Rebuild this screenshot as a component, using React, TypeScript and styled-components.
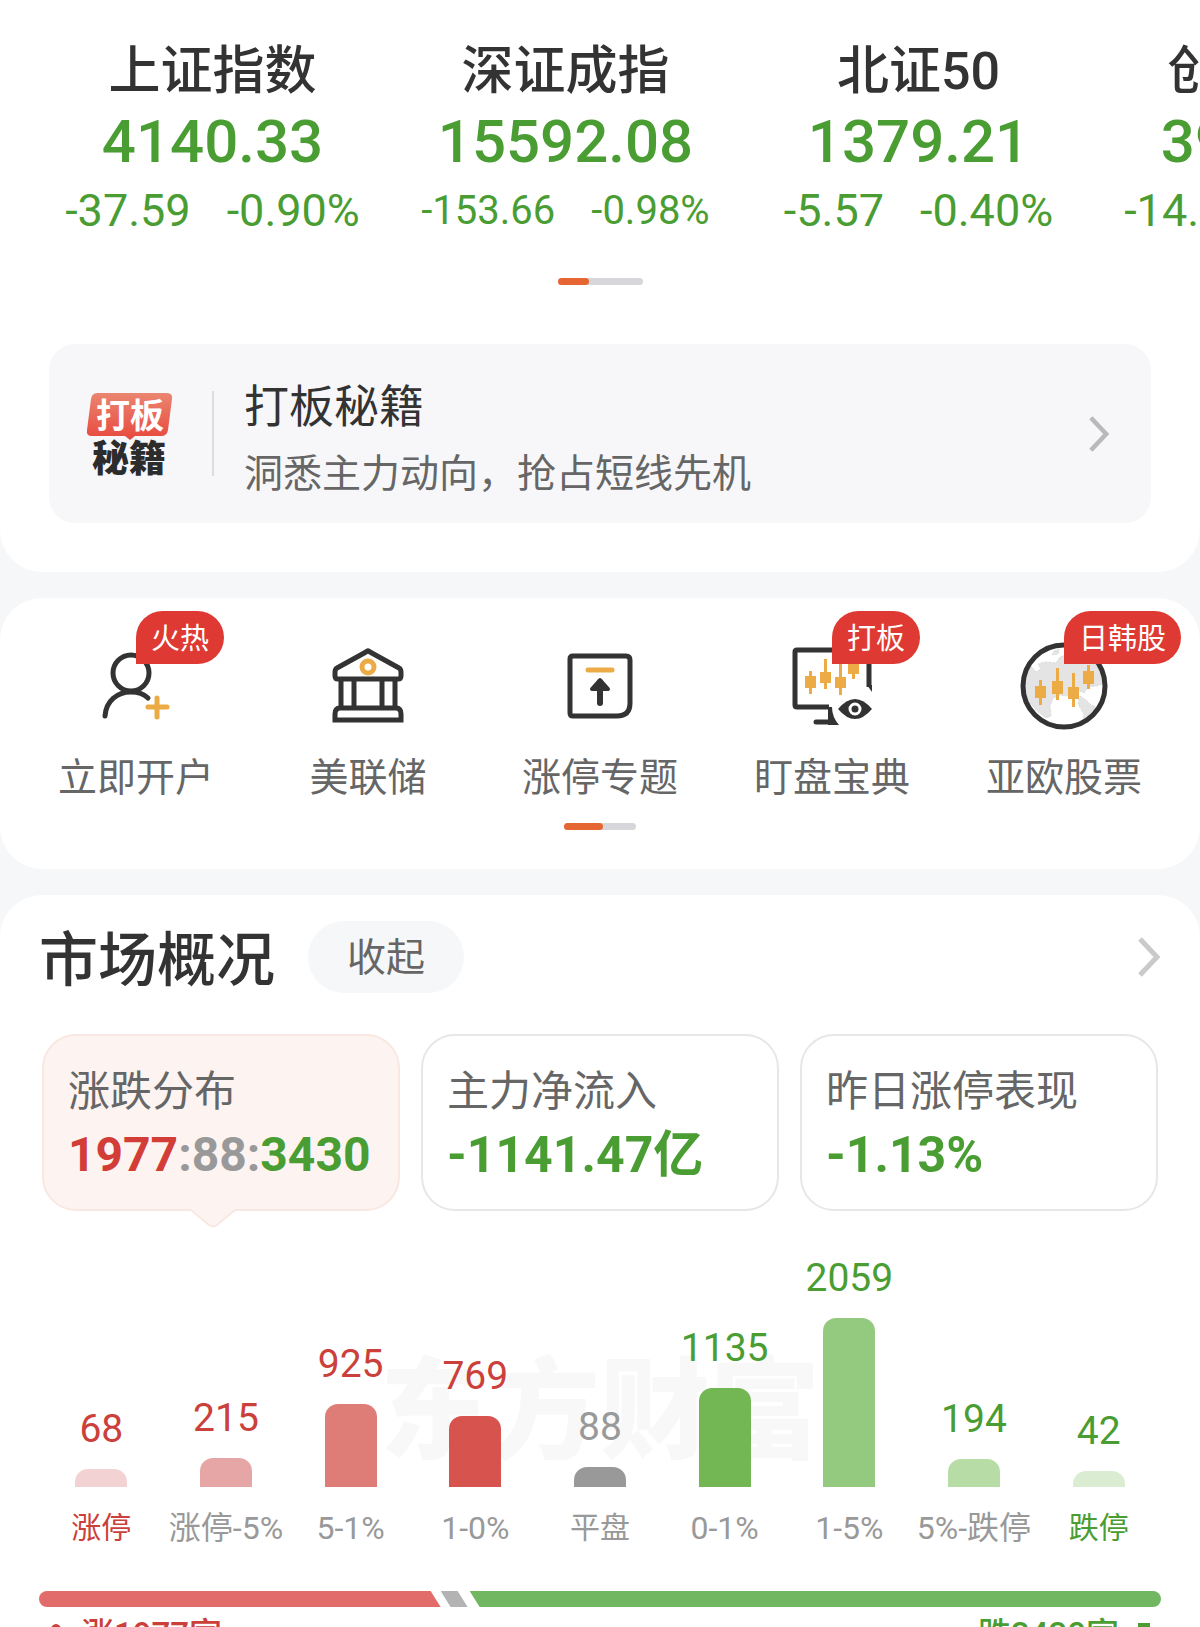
import React from "react";
import styled, { createGlobalStyle } from "styled-components";

const color = {
  ink: "#333333",
  sub: "#666666",
  muted: "#999999",
  green: "#4a9d32",
  red: "#cb403a",
  orange: "#e56633",
  amber: "#ecab45",
  page: "#f6f7f9",
};

const GlobalStyle = createGlobalStyle`
  * { box-sizing: border-box; }
  body {
    margin: 0;
    background: ${color.page};
    color: ${color.ink};
    font-family: Roboto, "Noto Sans CJK SC", sans-serif;
  }
  button { font-family: inherit; border: 0; margin: 0; cursor: pointer; }
  a { color: inherit; text-decoration: none; }
  h1, h2, p { margin: 0; font-weight: 400; }
`;

const Screen = styled.main`
  display: flex;
  flex-direction: column;
  gap: 26px;
  height: 100vh;
  overflow: hidden auto;
  scrollbar-width: none;
`;

const Panel = styled.section`
  flex: none;
  background: #fff;
  border-radius: 42px;
`;

const IndexPanel = styled(Panel)`
  padding: 40px 0 49px;
  border-radius: 0 0 42px 42px;
`;

const IndexStrip = styled.div`
  display: flex;
  padding-left: 36px;
  overflow: hidden;
`;

const IndexCard = styled.a`
  flex: none;
  width: 353px;
  display: flex;
  flex-direction: column;
  align-items: center;
  gap: 4px;
  white-space: nowrap;
`;

const IndexName = styled.span`
  font-size: 52px;
  line-height: 64px;
  font-weight: 500;
`;

const IndexValue = styled.span`
  font-size: 60px;
  line-height: 68px;
  font-weight: 500;
  color: ${color.green};
`;

const IndexChange = styled.span<{ $compact?: boolean }>`
  display: flex;
  gap: 36px;
  font-size: ${(p) => (p.$compact ? 40 : 45)}px;
  line-height: 62px;
  color: ${color.green};
`;

const Pager = styled.div<{ $width: number; $top: number }>`
  width: ${(p) => p.$width}px;
  height: 7px;
  margin: ${(p) => p.$top}px auto 0;
  border-radius: 4px;
  background: #d6d6db;
`;

const PagerThumb = styled.div<{ $width: number }>`
  width: ${(p) => p.$width}px;
  height: 7px;
  border-radius: 4px;
  background: ${color.orange};
`;

const Banner = styled.a`
  display: flex;
  align-items: center;
  height: 179px;
  margin: 59px 49px 0;
  padding: 0 41px 0 36px;
  border-radius: 26px;
  background: #f7f7f9;
`;

const BannerDivider = styled.span`
  width: 2px;
  height: 85px;
  margin: 0 30px 0 39px;
  background: #dcdde0;
`;

const BannerText = styled.span`
  flex: 1;
  display: flex;
  flex-direction: column;
  gap: 12px;
  padding-top: 12px;
`;

const BannerTitle = styled.span`
  font-size: 45px;
  line-height: 56px;
`;

const BannerSub = styled.span`
  font-size: 39px;
  line-height: 52px;
  color: ${color.sub};
`;

const ShortcutPanel = styled(Panel)`
  padding: 40px 20px 39px;
`;

const ShortcutGrid = styled.nav`
  display: grid;
  grid-template-columns: repeat(5, 1fr);
`;

const Shortcut = styled.a`
  display: flex;
  flex-direction: column;
  align-items: center;
  gap: 18px;
`;

const ShortcutIcon = styled.span`
  position: relative;
  width: 96px;
  height: 96px;
`;

const Badge = styled.span`
  position: absolute;
  left: 48px;
  top: -27px;
  padding: 4px 15px 0;
  border-radius: 27px 27px 27px 0;
  background: #de3a33;
  color: #fff;
  font-size: 29px;
  line-height: 49px;
  white-space: nowrap;
`;

const ShortcutLabel = styled.span`
  font-size: 39px;
  line-height: 52px;
  color: ${color.sub};
`;

const MarketPanel = styled(Panel)`
  padding: 26px 39px 40px;
  border-radius: 42px 42px 0 0;
`;

const MarketHeader = styled.header`
  display: flex;
  align-items: center;
  gap: 33px;
`;

const MarketTitle = styled.h2`
  padding-top: 8px;
  font-size: 59px;
  line-height: 64px;
  font-weight: 500;
`;

const FoldButton = styled.button`
  height: 72px;
  padding: 2px 39px 0;
  border-radius: 36px;
  background: ${color.page};
  color: ${color.sub};
  font-size: 39px;
  line-height: 70px;
`;

const MoreButton = styled.button`
  display: flex;
  margin-left: auto;
  padding: 0;
  background: none;
`;

const Tabs = styled.div`
  display: grid;
  grid-template-columns: repeat(3, 1fr);
  gap: 21px;
  margin: 41px 3px 0;
`;

const Tab = styled.button<{ $active?: boolean }>`
  position: relative;
  display: flex;
  flex-direction: column;
  gap: 5px;
  height: 177px;
  padding: 28px 24px;
  border: 2px solid ${(p) => (p.$active ? "#f9e8e1" : "#e7e7e7")};
  border-radius: 34px;
  background: ${(p) => (p.$active ? "#fdf4f1" : "#fff")};
  text-align: left;
  white-space: nowrap;
`;

const TabLabel = styled.span`
  font-size: 42px;
  line-height: 56px;
  color: ${color.sub};
`;

const TabValue = styled.span<{ $small?: boolean }>`
  font-size: ${(p) => (p.$small ? 48 : 50)}px;
  line-height: 60px;
  font-weight: 700;
  color: ${color.green};
`;

const Tone = styled.span<{ $color: string }>`
  color: ${(p) => p.$color};
`;

const TabPointer = styled.svg`
  position: absolute;
  left: 147px;
  top: 173px;
`;

const Chart = styled.div`
  position: relative;
  display: grid;
  grid-template-columns: repeat(9, 1fr);
  align-items: end;
  margin-top: 47px;
`;

const Watermark = styled.span`
  position: absolute;
  inset: 80px 0 auto;
  text-align: center;
  font-size: 110px;
  line-height: 150px;
  font-weight: 900;
  color: #f8f8f8;
`;

const Column = styled.div`
  position: relative;
  display: flex;
  flex-direction: column;
  align-items: center;
  white-space: nowrap;
`;

const ColumnValue = styled.span<{ $color: string }>`
  margin-bottom: 20px;
  font-size: 39px;
  line-height: 40px;
  color: ${(p) => p.$color};
`;

const ColumnBar = styled.span<{ $color: string }>`
  width: 52px;
  border-radius: 13px 13px 0 0;
  background: ${(p) => p.$color};
`;

const ColumnLabel = styled.span<{ $color: string; $range: boolean }>`
  margin-top: 21px;
  font-size: ${(p) => (p.$range ? 32 : 30)}px;
  line-height: 40px;
  color: ${(p) => p.$color};
`;

const Ratio = styled.div`
  display: flex;
  height: 16px;
  margin-top: 43px;
  border-radius: 8px;
  overflow: hidden;
`;

const RatioUp = styled.span`
  background: #e26c6a;
  clip-path: polygon(0 0, calc(100% - 10px) 0, 100% 100%, 0 100%);
`;

const RatioFlat = styled.span`
  width: 27px;
  background: #b3b3b3;
  clip-path: polygon(0 0, 17px 0, 100% 100%, 10px 100%);
`;

const RatioDown = styled.span`
  flex: 1;
  margin-left: 2px;
  background: #71b661;
  clip-path: polygon(0 0, 100% 0, 100% 100%, 10px 100%);
`;

const Totals = styled.div`
  display: flex;
  justify-content: space-between;
  margin-top: 4px;
  padding: 0 9px;
`;

const Total = styled.span<{ $color: string }>`
  display: flex;
  align-items: center;
  gap: 17px;
  font-size: 33px;
  line-height: 48px;
  font-weight: 500;
  color: ${(p) => p.$color};
`;

const Chevron = ({ stroke, small }: { stroke: string; small?: boolean }) => (
  <svg
    width={small ? 22 : 24}
    height={small ? 36 : 40}
    viewBox="0 0 24 40"
    fill="none"
    stroke={stroke}
    strokeWidth="5"
  >
    <path d="M3 2 L20 20 L3 38" />
  </svg>
);

const BannerLogo = () => (
  <svg width="88" height="88" viewBox="0 0 88 88">
    <defs>
      <linearGradient id="logoRed" x1="0" y1="0" x2="0" y2="1">
        <stop offset="0" stopColor="#ea8570" />
        <stop offset="1" stopColor="#e8493e" />
      </linearGradient>
    </defs>
    <path
      d="M12 3 H82 Q88 3 87 9 L83 40 Q82 46 76 46 H50 L45 50 L40 46 H7 Q1 46 2 40 L6 9 Q7 3 12 3 Z"
      fill="url(#logoRed)"
    />
    <text x="45" y="38" textAnchor="middle" fontFamily="Noto Sans CJK SC" fontWeight="700" fontSize="34" fill="#fff">
      打板
    </text>
    <text x="44" y="82" textAnchor="middle" fontFamily="Noto Sans CJK SC" fontWeight="900" fontSize="37" fill="#2c2c2c">
      秘籍
    </text>
  </svg>
);

const IconFrame = ({ children }: { children: React.ReactNode }) => (
  <svg
    width="96"
    height="96"
    viewBox="0 0 96 96"
    fill="none"
    stroke={color.ink}
    strokeWidth="5"
    strokeLinecap="round"
    strokeLinejoin="round"
  >
    {children}
  </svg>
);

const AccountIcon = () => (
  <IconFrame>
    <ellipse cx="43" cy="35" rx="18" ry="18" />
    <path d="M17 78 C18 63 29 54 43 54 C51 54 56 56 60 60" />
    <path d="M60 69 H79 M69 60 V79" stroke={color.amber} />
  </IconFrame>
);

const BankIcon = () => (
  <IconFrame>
    <path d="M46 14 Q48 12 50 14 L79 30 Q81 31 81 34 V38 Q81 41 78 41 H18 Q15 41 15 38 V34 Q15 31 17 30 Z" />
    <path d="M21 42 V69 M34 42 V69 M62 42 V69 M75 42 V69" />
    <path d="M15 82 V76 Q15 70 20 70 H76 Q81 70 81 76 V82 Z" strokeLinejoin="miter" />
    <circle cx="48" cy="29" r="6" stroke={color.amber} />
  </IconFrame>
);

const LimitUpIcon = () => (
  <IconFrame>
    <path d="M21 18 H74 Q78 18 78 22 V65 Q78 78 65 78 H21 Q18 78 18 75 V21 Q18 18 21 18 Z" />
    <path d="M36 32 H60" stroke={color.amber} />
    <path d="M48 44 V65" strokeWidth="6" />
    <path d="M40 51 L48 42 L56 51 Z" fill={color.ink} strokeWidth="4" />
  </IconFrame>
);

type Candle = [x: number, high: number, open: number, close: number, low: number];

const Candles = ({ items }: { items: Candle[] }) => (
  <g stroke="none" fill={color.amber}>
    {items.map(([x, high, open, close, low]) => (
      <React.Fragment key={x}>
        <rect x={x - 1} y={high} width="3" height={low - high} />
        <rect x={x - 5} y={open} width="11" height={close - open} />
      </React.Fragment>
    ))}
  </g>
);

const MonitorIcon = () => (
  <IconFrame>
    <path d="M45 69 H13 Q11 69 11 67 V14 Q11 12 13 12 H83 Q85 12 85 14 V49" strokeLinecap="butt" />
    <path d="M83 47 L88 54 V47 Z" fill={color.ink} stroke="none" />
    <path d="M32 84 H46" />
    <path d="M44 69 H48 Q48 79 55 87 H44 Z" fill={color.ink} stroke="none" />
    <Candles
      items={[
        [26, 33, 38, 50, 56],
        [41, 21, 34, 45, 51],
        [56, 26, 39, 50, 57],
        [69, 14, 25, 36, 41],
      ]}
    />
    <path d="M54 71 Q71 51 88 71 Q71 91 54 71 Z" fill={color.ink} stroke="none" />
    <circle cx="71" cy="71" r="5" stroke="#fff" strokeWidth="3" />
  </IconFrame>
);

const GlobeIcon = () => (
  <IconFrame>
    <path
      d="M9 38 L14 27 L20 34 L25 31 L22 26 L29 24 L40 25 L44 19 L50 17 H68 L78 24 L84 34 L87 46 L80 48 L72 49 L68 55 L62 52 L56 55 L50 58 L44 57 L37 60 L34 68 L35 78 L30 80 L20 72 L12 62 L8 50 Z M64 58 L70 62 L75 67 L83 70 L76 79 L67 84 L68 76 L62 66 Z M38 13 L43 11 L42 16 L36 17 Z"
      fill="#e4e4e4"
      stroke="#dcdcdc"
      strokeWidth="1"
      strokeDasharray="2 2"
    />
    <circle cx="48" cy="48" r="41" />
    <Candles
      items={[
        [24, 42, 48, 60, 67],
        [41, 30, 43, 56, 62],
        [57, 35, 49, 61, 69],
        [72, 27, 33, 46, 51],
      ]}
    />
  </IconFrame>
);

const Arrow = ({ down }: { down?: boolean }) => (
  <svg width="16" height="28" viewBox="0 0 16 28" fill="currentColor">
    <path d={down ? "M2 2 H14 V15 H16 L8 27 L0 15 H2 Z" : "M4 5 Q8 1 12 5 L16 14 H13 V28 H3 V14 H0 Z"} />
  </svg>
);

const indices = [
  { name: "上证指数", value: "4140.33", change: "-37.59", percent: "-0.90%" },
  { name: "深证成指", value: "15592.08", change: "-153.66", percent: "-0.98%", compact: true },
  { name: "北证50", value: "1379.21", change: "-5.57", percent: "-0.40%" },
  { name: "创业板指", value: "3914.87", change: "-14.27", percent: "-0.36%" },
];

const shortcuts = [
  { label: "立即开户", badge: "火热", Icon: AccountIcon },
  { label: "美联储", Icon: BankIcon },
  { label: "涨停专题", Icon: LimitUpIcon },
  { label: "盯盘宝典", badge: "打板", Icon: MonitorIcon },
  { label: "亚欧股票", badge: "日韩股", Icon: GlobeIcon },
];

const columns = [
  { label: "涨停", count: 68, bar: "#f2d2d2", tone: color.red, labelTone: color.red },
  { label: "涨停-5%", count: 215, bar: "#e7a6a6", tone: color.red },
  { label: "5-1%", count: 925, bar: "#de7c77", tone: color.red },
  { label: "1-0%", count: 769, bar: "#d7534e", tone: color.red },
  { label: "平盘", count: 88, bar: "#999999", tone: color.muted },
  { label: "0-1%", count: 1135, bar: "#73b754", tone: color.green },
  { label: "1-5%", count: 2059, bar: "#94c980", tone: color.green },
  { label: "5%-跌停", count: 194, bar: "#b7dca6", tone: color.green },
  { label: "跌停", count: 42, bar: "#daedd3", tone: color.green, labelTone: color.green },
];

const barHeight = (count: number) => Math.round(13 + count * 0.0758);

const up = 1977;
const flat = 88;
const down = 3430;

export default function App() {
  return (
    <>
      <GlobalStyle />
      <Screen>
        <IndexPanel>
          <IndexStrip>
            {indices.map((item) => (
              <IndexCard key={item.name} href="#">
                <IndexName>{item.name}</IndexName>
                <IndexValue>{item.value}</IndexValue>
                <IndexChange $compact={item.compact}>
                  <span>{item.change}</span>
                  <span>{item.percent}</span>
                </IndexChange>
              </IndexCard>
            ))}
          </IndexStrip>
          <Pager $width={85} $top={36}>
            <PagerThumb $width={31} />
          </Pager>
          <Banner href="#">
            <BannerLogo />
            <BannerDivider />
            <BannerText>
              <BannerTitle>打板秘籍</BannerTitle>
              <BannerSub>洞悉主力动向，抢占短线先机</BannerSub>
            </BannerText>
            <Chevron stroke="#b9b9bb" small />
          </Banner>
        </IndexPanel>

        <ShortcutPanel>
          <ShortcutGrid>
            {shortcuts.map(({ label, badge, Icon }) => (
              <Shortcut key={label} href="#">
                <ShortcutIcon>
                  <Icon />
                  {badge && <Badge>{badge}</Badge>}
                </ShortcutIcon>
                <ShortcutLabel>{label}</ShortcutLabel>
              </Shortcut>
            ))}
          </ShortcutGrid>
          <Pager $width={72} $top={19}>
            <PagerThumb $width={39} />
          </Pager>
        </ShortcutPanel>

        <MarketPanel>
          <MarketHeader>
            <MarketTitle>市场概况</MarketTitle>
            <FoldButton type="button">收起</FoldButton>
            <MoreButton type="button" aria-label="更多">
              <Chevron stroke="#cacaca" />
            </MoreButton>
          </MarketHeader>

          <Tabs>
            <Tab type="button" $active>
              <TabLabel>涨跌分布</TabLabel>
              <TabValue $small>
                <Tone $color="#d23d37">{up}</Tone>
                <Tone $color={color.muted}>:{flat}:</Tone>
                {down}
              </TabValue>
              <TabPointer width="44" height="20" viewBox="0 0 44 20">
                <path d="M0 0 H44 V2 L26 16 Q22 19 18 16 L0 2 Z" fill="#fdf4f1" />
                <path d="M0 1 L18 16 Q22 19 26 16 L44 1" fill="none" stroke="#f9e8e1" strokeWidth="2" />
              </TabPointer>
            </Tab>
            <Tab type="button">
              <TabLabel>主力净流入</TabLabel>
              <TabValue>-1141.47亿</TabValue>
            </Tab>
            <Tab type="button">
              <TabLabel>昨日涨停表现</TabLabel>
              <TabValue>-1.13%</TabValue>
            </Tab>
          </Tabs>

          <Chart>
            <Watermark>东方财富</Watermark>
            {columns.map((c) => (
              <Column key={c.label}>
                <ColumnValue $color={c.tone}>{c.count}</ColumnValue>
                <ColumnBar $color={c.bar} style={{ height: barHeight(c.count) }} />
                <ColumnLabel $color={c.labelTone ?? color.muted} $range={c.label.includes("-")}>
                  {c.label}
                </ColumnLabel>
              </Column>
            ))}
          </Chart>

          <Ratio>
            <RatioUp style={{ width: `${((up - 10) / (up + flat + down)) * 100}%` }} />
            <RatioFlat />
            <RatioDown />
          </Ratio>
          <Totals>
            <Total $color={color.red}>
              <Arrow />
              涨{up}家
            </Total>
            <Total $color={color.green}>
              跌{down}家
              <Arrow down />
            </Total>
          </Totals>
        </MarketPanel>
      </Screen>
    </>
  );
}
